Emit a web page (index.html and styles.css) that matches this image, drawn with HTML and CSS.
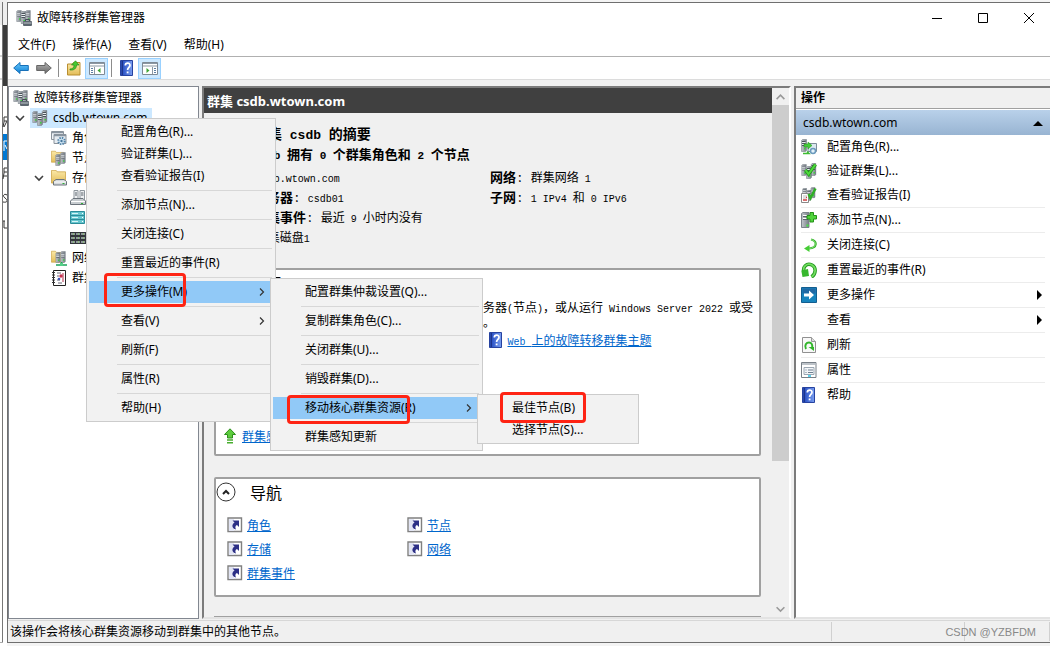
FILE: index.html
```html
<!DOCTYPE html>
<html lang="zh-CN">
<head>
<meta charset="utf-8">
<title>故障转移群集管理器</title>
<link rel="stylesheet" href="styles.css">
</head>
<body>
<svg class="defs" aria-hidden="true">
  <defs>
    <linearGradient id="gSrv" x1="0" x2="1"><stop offset="0" stop-color="#c3c8cd"/><stop offset="1" stop-color="#737b83"/></linearGradient>
    <linearGradient id="gBlue" x1="0" x2="0" y1="0" y2="1"><stop offset="0" stop-color="#6cc9fb"/><stop offset="1" stop-color="#0b7fd6"/></linearGradient>
    <linearGradient id="gGrey" x1="0" x2="0" y1="0" y2="1"><stop offset="0" stop-color="#b5b5b5"/><stop offset="1" stop-color="#666"/></linearGradient>
    <linearGradient id="gBook" x1="0" x2="1"><stop offset="0" stop-color="#24409f"/><stop offset=".25" stop-color="#3057c8"/><stop offset="1" stop-color="#7a9ff0"/></linearGradient>
    <linearGradient id="gFold" x1="0" x2="0" y1="0" y2="1"><stop offset="0" stop-color="#fbe9a8"/><stop offset="1" stop-color="#e3bd58"/></linearGradient>
    <symbol id="tower" viewBox="0 0 6 13">
      <path d="M.5 1.5 1.5.5h4v11l-1 1h-4z" fill="url(#gSrv)" stroke="#7b838a" stroke-width=".6"/>
      <path d="M1 2.5h3.5M1 4.5h3.5M1 6.5h3.5" stroke="#4c545b"/><path d="M1 3.5h3.5M1 5.5h3.5" stroke="#e9edf0"/>
      <rect x="3" y="9" width="1.5" height="1.5" fill="#3bd63b"/>
    </symbol>
    <symbol id="cluster" viewBox="0 0 16 16">
      <use href="#tower" x="0" y="1" width="6" height="12"/><use href="#tower" x="9.500" y="0" width="6" height="13"/><use href="#tower" x="5" y="3" width="6" height="13"/>
    </symbol>
    <symbol id="manager" viewBox="0 0 16 16">
      <use href="#tower" x="0" y="0" width="6" height="12"/><use href="#tower" x="4.500" y="1" width="6" height="13"/><use href="#tower" x="9" y="0" width="6" height="12"/>
      <rect x="7" y="11" width="9" height="5" rx="1" fill="#5c666f"/><path d="M9.500 11V9.500h4V11" fill="none" stroke="#434c54"/><path d="M7.500 13h8" stroke="#bfc6cc"/>
    </symbol>
    <symbol id="folder" viewBox="0 0 16 16"><path d="M.5 1.500h5l1 1.500h9v12H.5z" fill="url(#gFold)" stroke="#c9a040" stroke-width=".8"/></symbol>
    <symbol id="nodes" viewBox="0 0 16 16"><use href="#folder" x="0" y="0" width="13" height="13"/><use href="#tower" x="4" y="4" width="6" height="12"/><use href="#tower" x="9" y="2" width="6" height="12"/></symbol>
    <symbol id="network" viewBox="0 0 16 16"><use href="#folder" x="0" y="0" width="13" height="13"/><use href="#tower" x="4" y="2" width="6" height="11"/><use href="#tower" x="9" y="1" width="6" height="12"/><path d="M5 15h11M10.500 12v3" stroke="#1ba35b" stroke-width="1.500"/><rect x="9" y="13" width="3" height="3" fill="#55d088"/></symbol>
    <symbol id="storage" viewBox="0 0 16 16"><use href="#folder" x="0" y="-1" width="15" height="15"/><path d="M2.500 11.500 5 9.500h8l2.500 2v3.500h-13z" fill="#d4d8db" stroke="#6c747c"/><path d="M3 12h12" stroke="#fff"/><path d="M11.500 13.500h2" stroke="#2cae35"/></symbol>
    <symbol id="disks" viewBox="0 0 16 16"><path d="M4 .5h4v9H4zM10 .5h4.500v9H10z" fill="#eef0f2" stroke="#8e969d"/><path d="M5 3h2M5 5h2M11 3h2.500M11 5h2.500" stroke="#59626a"/><path d="M.5 11 3 8.500h10l2.500 2.500v3.500H.5z" fill="#c7ccd0" stroke="#6c747c"/><path d="M1 11.500h14" stroke="#fff"/><path d="M11 13.500h2" stroke="#2cae35"/></symbol>
    <symbol id="pool" viewBox="0 0 16 16"><path d="M.5 1.500h14v4H.5zM.5 5.500h14v4H.5zM.5 9.500h14v4H.5z" fill="#66c6cf" stroke="#2b8c99"/><path d="M2 3.500h6M2 7.500h6M2 11.500h6" stroke="#d8f5f7"/><path d="M12 3.500h1M12 7.500h1M12 11.500h1" stroke="#fff"/></symbol>
    <symbol id="rack" viewBox="0 0 16 16"><path d="M0 2h16v12H0z" fill="#33373b"/><path d="M1 4h4M6 4h4M11 4h4M1 8h4M6 8h4M11 8h4M1 12h4M6 12h4M11 12h4" stroke="#8d949a" stroke-width="2"/><path d="M3 4h1M8 4h1M13 4h1M3 8h1M8 8h1M13 8h1M3 12h1M8 12h1M13 12h1" stroke="#8de05a"/></symbol>
    <symbol id="roles" viewBox="0 0 16 16"><path d="M.5 1.500h12v8H.5z" fill="#eef2f6" stroke="#8b939b"/><path d="M3 4.500h12v9H3z" fill="#e5ebf1" stroke="#8b939b"/><path d="M1 2.500h11M3 5.500h12" stroke="#8894a0" stroke-width="1.500"/><circle cx="10.500" cy="11" r="3.200" fill="#d9ecf8" stroke="#5484a8" stroke-dasharray="1.500 1" stroke-width="2"/><circle cx="10.500" cy="11" r="1.200" fill="#44759b"/></symbol>
    <symbol id="events" viewBox="0 0 16 16"><path d="M2.500.5h12v15h-12z" fill="#fff" stroke="#222"/><path d="M1 2.500h3M1 5h3M1 7.500h3M1 10h3M1 12.500h3" stroke="#333"/><path d="M6 3h4M6 6h2M6 10h3M7 13h4" stroke="#667"/><circle cx="10" cy="6" r="1.700" fill="#c83250"/><circle cx="8" cy="9" r="1.300" fill="#4054b8"/><path d="M12 3v9" stroke="#b22a48"/></symbol>
    <symbol id="back" viewBox="0 0 16 16"><path d="M.7 8 7 2.500v3h8.300v5H7v3z" fill="url(#gBlue)" stroke="#1770b8" stroke-linejoin="round"/></symbol>
    <symbol id="forward" viewBox="0 0 16 16"><path d="M15.300 8 9 2.500v3H.7v5H9v3z" fill="url(#gGrey)" stroke="#666" stroke-linejoin="round"/></symbol>
    <symbol id="up" viewBox="0 0 16 16"><path d="M1.500 4h5l1-1.500h6.500V15h-12.500z" fill="url(#gFold)" stroke="#b98e31"/><path d="M4 9c3 0 4-1.500 4-4H5.500L9.500.8 13 5h-2.500c0 3.500-2.500 5.500-6.500 5z" fill="#47c832" stroke="#258a17" stroke-width=".7"/></symbol>
    <symbol id="paneL" viewBox="0 0 16 16"><path d="M.5 2.500h15v12H.5z" fill="#fff" stroke="#7f8a95"/><path d="M1 3.500h14M1 6h14" stroke="#8c98a4"/><path d="M5.500 7v7" stroke="#8c98a4"/><path d="M2 8.500h2M2 10.500h2M2 12.500h2" stroke="#5d7fa3"/><path d="M11.500 8v5L8.500 10.500z" fill="#3ea635"/></symbol>
    <symbol id="paneR" viewBox="0 0 16 16"><path d="M.5 2.500h15v12H.5z" fill="#fff" stroke="#7f8a95"/><path d="M1 3.500h14M1 6h14" stroke="#8c98a4"/><path d="M10.500 7v7" stroke="#8c98a4"/><path d="M12 8.500h2M12 10.500h2M12 12.500h2" stroke="#5d7fa3"/><path d="M4.500 8v5l3-2.500z" fill="#3ea635"/></symbol>
    <symbol id="help" viewBox="0 0 16 16"><path d="M1.500.5h12v15h-12z" fill="url(#gBook)" stroke="#2743a0"/><path d="M3.500 1v14" stroke="#1c348b"/><path d="M6.300 5.500C6.300 2.500 11 2.500 11 5.200 11 7.500 8.600 7.300 8.600 10" fill="none" stroke="#fff" stroke-width="1.700"/><rect x="7.700" y="11.500" width="1.800" height="1.800" fill="#fff"/></symbol>
    <symbol id="jump" viewBox="0 0 16 16"><path d="M1 1h13.500v13.500H1z" fill="#fff" stroke="#808080" stroke-width="1.400"/><path d="M2 2h5v12H2z" fill="#e2e5f4"/><path d="M5.500 3.500h6.500V10l-2-2C8 9 8 10.500 9 12.500 4.500 11.500 4.500 7.300 7.500 5.500z" fill="#2c2f86"/></symbol>
    <symbol id="greenUp" viewBox="0 0 16 16"><path d="M8 .8 13.500 6.500H10.500V10h-5V6.500h-3z" fill="#5dcc3d" stroke="#2d8f1c"/><path d="M5 12h6M5 14.800h6" stroke="#48ae2e" stroke-width="1.600"/></symbol>
    <symbol id="aRole" viewBox="0 0 16 16"><use href="#tower" x="0" y="0" width="6" height="13"/><path d="M7 4.500h8.500v8H7z" fill="#dce8f0" stroke="#7d8c99"/><path d="M3 5h4V3l4 3.500L7 10V8H3z" fill="#44cc38" stroke="#22901c" stroke-width=".5"/><circle cx="12" cy="12" r="2.500" fill="#e5f2fa" stroke="#6a9abd" stroke-width="1.500"/><path d="M2 14.500h6l-2-2" stroke="#3dbb32" stroke-width="1.500" fill="none"/></symbol>
    <symbol id="aCheck" viewBox="0 0 16 16"><use href="#cluster" width="16" height="16"/><path d="M4.500 7 7.500 11 14.500 1.500" fill="none" stroke="#1f9618" stroke-width="3.500"/><path d="M4.500 7 7.500 11 14.500 1.500" fill="none" stroke="#4ed83c" stroke-width="2"/></symbol>
    <symbol id="aReport" viewBox="0 0 16 16"><use href="#cluster" width="16" height="14"/><path d="M.5 6.500h7v9h-7z" fill="#fff" stroke="#888"/><path d="M2 9h4M2 11h3" stroke="#bbb"/><path d="M2 13h4M5 10.500h1" stroke="#cc4040" stroke-width="1.500"/><path d="M7.500 7 9.500 11 14.500 1.500" fill="none" stroke="#2fae25" stroke-width="2.500"/></symbol>
    <symbol id="aAdd" viewBox="0 0 16 16"><path d="M.5 1.500 2 .5h6V15.500H.5z" fill="url(#gSrv)" stroke="#7b838a"/><path d="M2 3.500h5M2 6.500h5" stroke="#fff"/><path d="M2 4.500h5M2 7.500h5" stroke="#59626a"/><path d="M9 .5h3.500v3h3V7h-3v3H9V7H6V3.500h3z" fill="#50d43b" stroke="#259019"/><rect x="5.500" y="12.500" width="2" height="2" fill="#42e83c"/></symbol>
    <symbol id="aClose" viewBox="0 0 16 16"><path d="M10 2.500C16.500 4 16.500 11 8 11.500" fill="none" stroke="#38b52d" stroke-width="2.200"/><path d="M10 2.500C16 4 16 11 8 11.500" fill="none" stroke="#a7ef9a" stroke-width=".7"/><path d="M8.500 8V15L3 11.500z" fill="#45cd35"/></symbol>
    <symbol id="aReset" viewBox="0 0 16 16"><path d="M4 12C0 5 6 .5 11 3c4.500 2.500 4 9-.5 12" fill="none" stroke="#249a20" stroke-width="3.500"/><path d="M4 11C0 5 6 .5 11 3c4.500 2.500 4 9-.5 12" fill="none" stroke="#72dd60" stroke-width="1.700"/><path d="M.3 8.500 7 7l1 7-6.500 1z" fill="#37b72e"/></symbol>
    <symbol id="aMore" viewBox="0 0 16 16"><path d="M.5.500h15v15H.5z" fill="#1784bd" stroke="#135e90"/><path d="M1.500 1.500h13v5h-13z" fill="#2069a4"/><path d="M3 6.500h5V3.500L13 8l-5 4.500v-3H3z" fill="#fff"/></symbol>
    <symbol id="aRefresh" viewBox="0 0 16 16"><path d="M1.500.5h9l4 4v11h-13z" fill="#f8f8f8" stroke="#909090"/><path d="M10.500.5v4h4" fill="#ddd" stroke="#999"/><path d="M5 12c-2-4 .5-6.500 3-6.500S12 8 11 11" fill="none" stroke="#32b52b" stroke-width="2"/><path d="M7.500 10H13v4z" fill="#32b52b"/></symbol>
    <symbol id="aProps" viewBox="0 0 16 16"><path d="M.5.500h14.500v15H.5z" fill="#fff" stroke="#777f87"/><path d="M1 2h13.500" stroke="#a7afb7" stroke-width="1.500"/><path d="M3 5.500h10v7H3z" fill="#f2f5f8" stroke="#9aa6b2"/><path d="M4.500 8h1M7 8h5M4.500 10.500h1M7 10.500h5" stroke="#6e7f90"/><path d="M7 14h3" stroke="#26c3e8" stroke-width="1.500"/></symbol>
    <symbol id="chevR" viewBox="0 0 10 10"><path d="M3 1.500 6.500 5 3 8.500" fill="none" stroke="#333" stroke-width="1.200"/></symbol>
    <symbol id="chevD" viewBox="0 0 10 10"><path d="M1 3l4 4 4-4" fill="none" stroke="#404040" stroke-width="1.600"/></symbol>
    <symbol id="triR" viewBox="0 0 10 10"><path d="M2 0v10l5-5z" fill="#000"/></symbol>
  </defs>
</svg>

<div class="desktop">
  <div class="sliver" aria-hidden="true">
    <svg width="7" height="646" viewBox="0 0 7 646">
      <path d="M0 0h7v646H0z" fill="#fff"/><path d="M0 0h7v25H0z" fill="#eee"/><path d="M2 25h5v61H2z" fill="#3c3c3c"/>
      <path d="M2.500 2v640" stroke="#777"/><path d="M3 134h4v26H3z" fill="#0078d4"/>
      <path d="M0 56h2M0 79h2M0 642.500h3" stroke="#aaa"/>
      <path d="M7 117H4v5l-1 5M4 121h3l-3 6M7 168H4v5l-1 6M4 172h3M7 176h-3M4 221v7h3M3 221h2" fill="none" stroke="#333"/>
      <path d="M7 195c-3-2-5 1-2 3s3 5-2 4" fill="none" stroke="#333"/><path d="M7 141H4v10M5 145l2 4" fill="none" stroke="#fff"/>
    </svg>
  </div>

  <div class="window">
    <header class="titlebar">
      <svg class="ico"><use href="#manager"/></svg>
      <h1>故障转移群集管理器</h1>
      <div class="controls">
        <button aria-label="最小化"><svg viewBox="0 0 10 10"><path d="M0 5.500h10" stroke="#000"/></svg></button>
        <button aria-label="最大化"><svg viewBox="0 0 10 10"><path d="M.5.500h9v9h-9z" fill="none" stroke="#000"/></svg></button>
        <button aria-label="关闭"><svg viewBox="0 0 10 10"><path d="M0 0l10 10M10 0 0 10" stroke="#000"/></svg></button>
      </div>
    </header>

    <nav class="menubar">
      <button>文件(F)</button><button>操作(A)</button><button>查看(V)</button><button>帮助(H)</button>
    </nav>

    <div class="toolbar">
      <button aria-label="后退"><svg class="ico"><use href="#back"/></svg></button>
      <button aria-label="前进"><svg class="ico"><use href="#forward"/></svg></button>
      <span class="tool-sep"></span>
      <button aria-label="向上"><svg class="ico"><use href="#up"/></svg></button>
      <button class="on" aria-label="显示控制台树"><svg class="ico"><use href="#paneL"/></svg></button>
      <span class="tool-sep"></span>
      <button aria-label="帮助"><svg class="ico"><use href="#help"/></svg></button>
      <button class="on" aria-label="显示操作窗格"><svg class="ico"><use href="#paneR"/></svg></button>
    </div>

    <main class="panes">
      <section class="tree">
        <div class="node"><svg class="ico"><use href="#manager"/></svg><span>故障转移群集管理器</span></div>
        <div class="node level1"><svg class="chev"><use href="#chevD"/></svg><div class="picked"><svg class="ico"><use href="#cluster"/></svg><span>csdb.wtown.com</span></div></div>
        <div class="node level2"><svg class="ico"><use href="#roles"/></svg><span>角色</span></div>
        <div class="node level2"><svg class="ico"><use href="#nodes"/></svg><span>节点</span></div>
        <div class="node level2 open"><svg class="chev"><use href="#chevD"/></svg><svg class="ico"><use href="#storage"/></svg><span>存储</span></div>
        <div class="node level3"><svg class="ico"><use href="#disks"/></svg><span>磁盘</span></div>
        <div class="node level3"><svg class="ico"><use href="#pool"/></svg><span>池</span></div>
        <div class="node level3"><svg class="ico"><use href="#rack"/></svg><span>机箱</span></div>
        <div class="node level2"><svg class="ico"><use href="#network"/></svg><span>网络</span></div>
        <div class="node level2"><svg class="ico"><use href="#events"/></svg><span>群集事件</span></div>

        <ul class="menu context">
          <li><button>配置角色(R)...</button></li>
          <li><button>验证群集(L)...</button></li>
          <li><button>查看验证报告(I)</button></li>
          <li class="sep"><button>添加节点(N)...</button></li>
          <li class="sep"><button>关闭连接(C)</button></li>
          <li class="sep"><button>重置最近的事件(R)</button></li>
          <li class="sep">
            <div class="anchor">
              <button class="hot">更多操作(M)<svg class="chev"><use href="#chevR"/></svg></button>
              <ul class="menu sub">
                <li><button>配置群集仲裁设置(Q)...</button></li>
                <li class="sep"><button>复制群集角色(C)...</button></li>
                <li class="sep"><button>关闭群集(U)...</button></li>
                <li class="sep"><button>销毁群集(D)...</button></li>
                <li class="sep">
                  <div class="anchor">
                    <button class="hot">移动核心群集资源(R)<svg class="chev"><use href="#chevR"/></svg></button>
                    <ul class="menu sub last">
                      <li><div class="anchor"><button>最佳节点(B)</button><span class="mark mark-best"></span></div></li>
                      <li><button>选择节点(S)...</button></li>
                    </ul>
                    <span class="mark mark-move"></span>
                  </div>
                </li>
                <li class="sep"><button>群集感知更新</button></li>
              </ul>
              <span class="mark mark-more"></span>
            </div>
          </li>
          <li class="sep"><button>查看(V)<svg class="chev"><use href="#chevR"/></svg></button></li>
          <li class="sep"><button>刷新(F)</button></li>
          <li class="sep"><button>属性(R)</button></li>
          <li class="sep"><button>帮助(H)</button></li>
        </ul>
      </section>

      <section class="details">
        <div class="details-main">
          <h2 class="bar">群集 csdb.wtown.com</h2>
          <div class="content">
            <div class="summary">
              <svg class="big"><use href="#cluster"/></svg>
              <div>
                <h3>群集<span class="m"> csdb </span>的摘要</h3>
                <p><span class="m">csdb </span>拥有<span class="m"> 0 </span>个群集角色和<span class="m"> 2 </span>个节点</p>
              </div>
            </div>
            <div class="facts">
              <dl>
                <div><dt>名称</dt><dd><span class="m">csdb.wtown.com</span></dd></div>
                <div><dt>当前主服务器</dt><dd><span class="m">csdb01</span></dd></div>
                <div><dt>最近的群集事件</dt><dd>最近<span class="m"> 9 </span>小时内没有</dd></div>
                <div><dt>见证</dt><dd>群集磁盘<span class="m">1</span></dd></div>
              </dl>
              <dl>
                <div><dt>网络</dt><dd>群集网络<span class="m"> 1</span></dd></div>
                <div><dt>子网</dt><dd><span class="m">1 IPv4 </span>和<span class="m"> 0 IPv6</span></dd></div>
              </dl>
            </div>

            <section class="card">
              <h3><svg class="round" viewBox="0 0 20 20"><circle cx="10" cy="10" r="9" fill="#fff" stroke="#333"/><path d="M7 12l3-3 3 3" fill="none" stroke="#222" stroke-width="2"/></svg>配置</h3>
              <p class="intro">为此群集配置高可用性角色、添加一个或多个服务器<span class="m">(</span>节点<span class="m">)</span>，或从运行<span class="m"> Windows Server 2022 </span>或受支持的早期<span class="m"> Windows Server </span>版本群集复制角色。</p>
              <div class="config-links">
                <ul>
                  <li><svg class="ico"><use href="#aCheck"/></svg><a href="#">验证群集...</a></li>
                  <li><svg class="ico"><use href="#aAdd"/></svg><a href="#">添加节点...</a></li>
                  <li><svg class="ico"><use href="#aRole"/></svg><a href="#">配置角色...</a></li>
                  <li><svg class="ico"><use href="#greenUp"/></svg><a href="#">复制角色</a></li>
                  <li><svg class="ico"><use href="#greenUp"/></svg><a href="#">群集感知更新</a></li>
                </ul>
                <ul>
                  <li><svg class="ico"><use href="#help"/></svg><a href="#"><span class="m">Web </span>上的故障转移群集主题</a></li>
                </ul>
              </div>
            </section>

            <section class="card">
              <h3><svg class="round" viewBox="0 0 20 20"><circle cx="10" cy="10" r="9" fill="#fff" stroke="#333"/><path d="M7 12l3-3 3 3" fill="none" stroke="#222" stroke-width="2"/></svg>导航</h3>
              <ul class="nav-links">
                <li><svg class="ico"><use href="#jump"/></svg><a href="#">角色</a></li>
                <li><svg class="ico"><use href="#jump"/></svg><a href="#">节点</a></li>
                <li><svg class="ico"><use href="#jump"/></svg><a href="#">存储</a></li>
                <li><svg class="ico"><use href="#jump"/></svg><a href="#">网络</a></li>
                <li><svg class="ico"><use href="#jump"/></svg><a href="#">群集事件</a></li>
              </ul>
            </section>
            <div class="next-card"></div>
          </div>
        </div>
        <div class="scroll" aria-hidden="true">
          <svg viewBox="0 0 10 10"><path d="M2 7l3-3 3 3" fill="none" stroke="#999" stroke-width="1.200"/></svg>
          <div class="track"><div class="thumb"></div></div>
          <svg viewBox="0 0 10 10"><path d="M2 4l3 3 3-3" fill="none" stroke="#999" stroke-width="1.200"/></svg>
        </div>
      </section>

      <aside class="actions">
        <h2>操作</h2>
        <div class="group"><span>csdb.wtown.com</span><svg viewBox="0 0 10 6"><path d="M0 6l5-5 5 5z"/></svg></div>
        <ul>
          <li><button><svg class="ico"><use href="#aRole"/></svg>配置角色(R)...</button></li>
          <li><button><svg class="ico"><use href="#aCheck"/></svg>验证群集(L)...</button></li>
          <li><button><svg class="ico"><use href="#aReport"/></svg>查看验证报告(I)</button></li>
          <li class="ruled"><button><svg class="ico"><use href="#aAdd"/></svg>添加节点(N)...</button></li>
          <li class="ruled"><button><svg class="ico"><use href="#aClose"/></svg>关闭连接(C)</button></li>
          <li class="ruled"><button><svg class="ico"><use href="#aReset"/></svg>重置最近的事件(R)</button></li>
          <li class="ruled"><button><svg class="ico"><use href="#aMore"/></svg>更多操作<svg class="chev"><use href="#triR"/></svg></button></li>
          <li class="ruled"><button><svg class="ico"></svg>查看<svg class="chev"><use href="#triR"/></svg></button></li>
          <li class="ruled"><button><svg class="ico"><use href="#aRefresh"/></svg>刷新</button></li>
          <li class="ruled"><button><svg class="ico"><use href="#aProps"/></svg>属性</button></li>
          <li class="ruled"><button><svg class="ico"><use href="#help"/></svg>帮助</button></li>
        </ul>
      </aside>
    </main>

    <footer class="status">
      <span class="message">该操作会将核心群集资源移动到群集中的其他节点。</span>
      <span class="cell"></span><span class="cell"></span>
      <span class="credit">CSDN @YZBFDM</span>
    </footer>
  </div>
</div>
</body>
</html>
```

FILE: styles.css
```css
* { box-sizing: border-box; margin: 0; padding: 0; }

body {
  background: #f4f4f4;
  color: #000;
  font: 12px/20px "Noto Sans", "Noto Sans CJK SC", sans-serif;
}

ul { list-style: none; }
button { border: 0; background: none; color: inherit; font: inherit; text-align: left; }
a { color: #0066cc; }
.defs { position: absolute; width: 0; height: 0; }
.ico { width: 16px; height: 16px; flex: none; }
.chev { width: 10px; height: 10px; flex: none; }

.desktop { display: flex; height: 100vh; overflow: hidden; }
.sliver { width: 7px; flex: none; overflow: hidden; }

.window {
  flex: 1;
  min-width: 0;
  display: flex;
  flex-direction: column;
  margin: 2px 0 3px;
  border: 1px solid #6f6f6f;
  border-right: 0;
  background: #f0f0f0;
}

/* title, menus, tools */
.titlebar { display: flex; align-items: center; height: 29px; padding-left: 8px; background: #fff; flex: none; }
.titlebar h1 { margin-left: 5px; font-size: 12px; font-weight: 400; }
.controls { display: flex; margin-left: auto; }
.controls button { display: grid; place-items: center; width: 46px; height: 28px; padding-left: 4px; }
.controls svg { width: 10px; height: 10px; }

.menubar { display: flex; gap: 17px; height: 25px; padding: 3px 10px; background: #fff; border-bottom: 1px solid #b0b0b0; flex: none; }

.toolbar { display: flex; align-items: center; height: 23px; padding-left: 1px; background: #fff; border-bottom: 1px solid #dcdcdc; flex: none; }
.toolbar button { display: grid; place-items: center; width: 23px; height: 21px; }
.toolbar .on { background: #cce8ff; border: 1px solid #99d1ff; }
.tool-sep { width: 1px; height: 18px; margin: 0 3px; background: #8c8c8c; }

/* panes */
.panes { flex: 1; min-height: 0; display: flex; gap: 3px; padding: 6px 0 1px; }

.tree { position: relative; z-index: 1; flex: 0 0 191px; padding-top: 1px; background: #fff; border: 1px solid #828790; }
.node { display: flex; align-items: center; gap: 5px; height: 20px; padding-left: 4px; white-space: nowrap; }
.level1 { padding-left: 6px; }
.level2 { padding-left: 42px; }
.level2.open { padding-left: 25px; }
.level2.open .chev + .ico { margin-left: 2px; }
.level3 { padding-left: 61px; }
.picked { display: flex; align-items: center; gap: 5px; height: 20px; padding: 0 4px 0 2px; background: #cce8ff; }

.menu { position: absolute; padding: 2px; background: #f2f2f2; border: 1px solid #ccc; z-index: 2; }
.context { left: 77px; top: 31px; width: 190px; }
.sub { left: calc(100% - 3px); top: -3px; width: 213px; }
.last { width: 162px; }
.menu button { display: flex; align-items: center; justify-content: space-between; width: 100%; height: 22px; padding: 0 6px 0 32px; white-space: nowrap; }
.menu .hot { background: #91c9f7; }
.menu .sep::before { content: ""; display: block; height: 1px; margin: 3px 1px 3px 28px; background: #d7d7d7; }
.anchor { position: relative; }

.mark { position: absolute; z-index: 3; border: 3px solid #fe2414; border-radius: 4px; pointer-events: none; }
.mark-more { left: 15px; top: -8px; width: 82px; height: 34px; }
.mark-move { left: 14px; top: -2px; width: 123px; height: 29px; }
.mark-best { left: 20px; top: -5px; width: 86px; height: 31px; }

.details {
  flex: 1;
  min-width: 0;
  display: flex;
  border: 2px solid #7b7b7b;
  border-right-color: #fff;
  border-bottom-color: #e3e3e3;
}
.details-main { flex: 1; min-width: 0; display: flex; flex-direction: column; overflow: hidden; }
.bar { flex: none; height: 25px; padding-left: 3px; background: #404040; color: #fff; font-size: 13px; line-height: 26px; }
.content { padding: 9px 11px 0 10px; font-family: "Noto Sans CJK SC", sans-serif; }
.m { font-family: "Liberation Mono", monospace; font-size: 10px; line-height: 1; white-space: break-spaces; }

.summary { display: flex; gap: 6px; padding-left: 2px; }
.big { width: 32px; height: 32px; }
.summary h3 { height: 22px; font-size: 14px; line-height: 22px; }
.summary h3 .m { font-size: 13px; }
.summary p { height: 20px; font-size: 13px; line-height: 20px; font-weight: 700; }
.summary p .m { font-size: 11px; }

.facts { display: grid; grid-template-columns: 1fr 1fr; gap: 4px; padding: 3px 0 0 1px; }
.facts dl > div { display: flex; height: 20px; white-space: nowrap; }
.facts dt { font-size: 13px; font-weight: 700; }
.facts dt::after { content: ":"; font-weight: 400; margin: 0 9px 0 2px; }

.card { background: #fff; border: 2px solid #a0a0a0; border-radius: 2px; }
.facts + .card { margin-top: 21px; }
.card + .card { margin-top: 21px; }
.card h3 { display: flex; align-items: center; gap: 14px; height: 26px; font-size: 16px; line-height: 22px; font-weight: 400; }
.round { width: 20px; height: 20px; }
.intro { height: 32px; padding: 4px 4px 0 15px; line-height: 14px; }
.card li { display: flex; align-items: center; gap: 4px; height: 24px; }
.config-links { display: grid; grid-template-columns: 1fr 1fr; padding: 0 6px 6px 6px; }
.nav-links { display: grid; grid-template-columns: 180px 180px; padding: 8px 11px 10px; }
.next-card { margin-top: 19px; height: 20px; border-top: 2px solid #a0a0a0; }

.scroll { display: flex; flex-direction: column; width: 17px; flex: none; }
.scroll svg { width: 17px; height: 17px; padding: 2px; }
.track { flex: 1; }
.thumb { height: 72%; background: #cdcdcd; }

.actions { flex: 0 0 256px; background: #fff; border: 2px solid #7b7b7b; border-right: 0; border-bottom-color: #e3e3e3; }
.actions h2 { height: 21px; padding-left: 5px; background: #f0f0f0; border-bottom: 1px solid #a0a0a0; font-size: 12px; }
.group { display: flex; align-items: center; justify-content: space-between; height: 26px; padding: 0 7px; background: linear-gradient(#b9d1ea, #98b4d2); border-top: 1px solid #fff; }
.group svg { width: 10px; height: 6px; }
.actions ul { padding: 0 5px; }
.actions button { display: flex; align-items: center; gap: 10px; width: 100%; height: 24px; }
.actions .chev { margin-left: auto; }
.actions .ruled { border-top: 1px solid #ececec; }

.status { position: relative; display: flex; align-items: stretch; height: 22px; border-top: 1px solid #d7d7d7; flex: none; }
.message { flex: 1; padding-left: 2px; line-height: 22px; }
.cell { width: 133px; margin: 1px 0; border-left: 1px solid #d0d0d0; }
.cell + .cell { width: 86px; border-right: 1px solid #d0d0d0; }
.credit { position: absolute; right: 14px; top: 1px; color: #888; font-family: "Liberation Sans", Arial, sans-serif; font-size: 11px; }
```
